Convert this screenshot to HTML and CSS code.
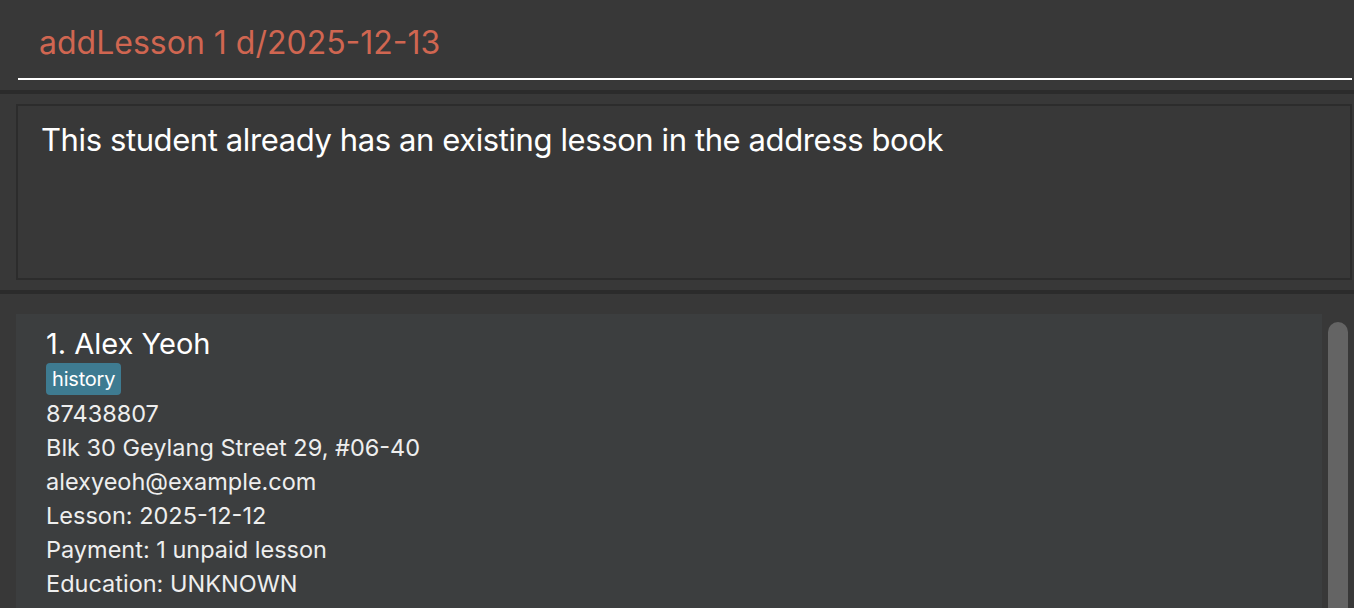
FILE: index.html
```html
<!DOCTYPE html>
<html>
<head>
<meta charset="utf-8">
<link rel="stylesheet" href="styles.css">
</head>
<body>
<div class="app">
  <section class="command-pane">
    <div class="command-field">addLesson 1 d/2025-12-13</div>
  </section>
  <div class="divider"></div>
  <section class="result-pane">
    <div class="result-box">This student already has an existing lesson in the address book</div>
  </section>
  <div class="divider"></div>
  <section class="list-pane">
    <div class="list">
      <div class="card">
        <div class="name">1. Alex Yeoh</div>
        <div class="tags"><span class="tag">history</span></div>
        <div class="detail">87438807</div>
        <div class="detail">Blk 30 Geylang Street 29, #06-40</div>
        <div class="detail">alexyeoh@example.com</div>
        <div class="detail">Lesson: 2025-12-12</div>
        <div class="detail">Payment: 1 unpaid lesson</div>
        <div class="detail">Education: UNKNOWN</div>
      </div>
    </div>
    <div class="scrollbar"><div class="thumb"></div></div>
  </section>
</div>
</body>
</html>
```
FILE: styles.css
```css
html, body {
  margin: 0;
  padding: 0;
  background: #383838;
  height: 100%;
  overflow: hidden;
  font-family: Inter, "Noto Sans", sans-serif;
}
.app {
  display: flex;
  flex-direction: column;
  height: 608px;
  overflow: hidden;
}
.command-pane {
  height: 90px;
  flex: none;
  padding: 0 2px 0 18px;
  box-sizing: border-box;
  display: flex;
  flex-direction: column;
  justify-content: flex-end;
}
.command-field {
  color: #d06651;
  font-size: 32px;
  line-height: 34px;
  padding: 0 0 18px 21px;
  border-bottom: 2px solid #ffffff;
  margin-bottom: 10px;
  letter-spacing: 0;
}
.divider {
  height: 4px;
  background: #2b2b2b;
  flex: none;
}
.result-pane {
  height: 196px;
  padding: 10px 2px 10px 16px;
  box-sizing: border-box;
  flex: none;
}
.result-box {
  height: 100%;
  box-sizing: border-box;
  border: 2px solid #2c2c2c;
  color: #ffffff;
  font-size: 31px;
  line-height: 40px;
  padding: 14px 0 0 23px;
  letter-spacing: -0.4px;
}
.list-pane {
  flex: 1;
  display: flex;
  padding: 20px 0 0 16px;
  min-height: 0;
}
.list {
  flex: 1;
  background: #3c3e3f;
  min-height: 0;
  overflow: hidden;
}
.card {
  padding: 12px 0 0 30px;
  color: #ffffff;
}
.name {
  font-size: 29px;
  line-height: 36px;
  letter-spacing: 0;
}
.tags {
  display: flex;
  margin-top: 1px;
  margin-bottom: 2px;
}
.tag {
  background: #3e7b91;
  color: #ffffff;
  font-size: 20px;
  line-height: 32px;
  padding: 0 6px;
  border-radius: 4px;
  letter-spacing: -0.2px;
}
.detail {
  font-size: 23.5px;
  line-height: 34px;
  color: #eeeeee;
  letter-spacing: 0;
}
.scrollbar {
  width: 32px;
  flex: none;
  padding: 8px 6px 0 6px;
  box-sizing: border-box;
}
.thumb {
  height: 400px;
  background: #646464;
  border-radius: 10px;
}
```
